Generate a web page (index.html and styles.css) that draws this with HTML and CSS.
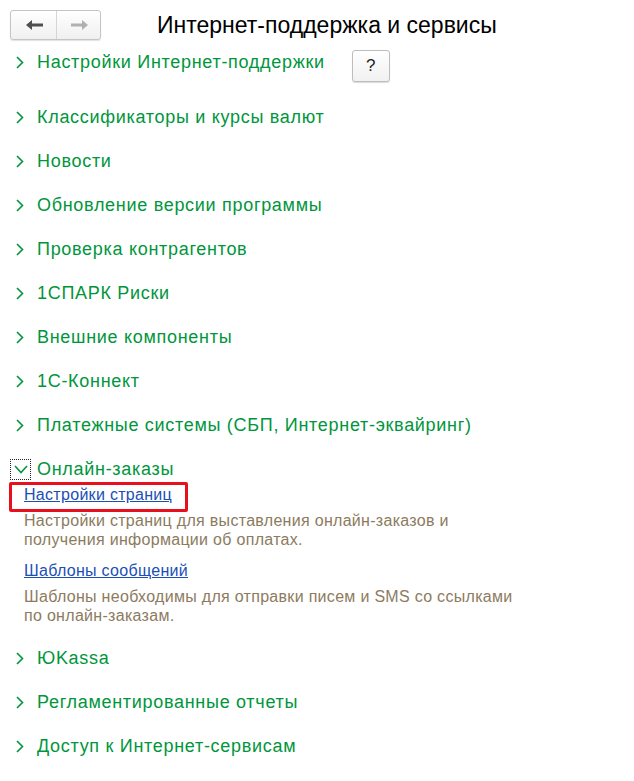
FILE: index.html
```html
<!DOCTYPE html>
<html lang="ru">
<head>
<meta charset="utf-8">
<title>Интернет-поддержка и сервисы</title>
<link rel="stylesheet" href="styles.css">
</head>
<body>
<div class="page">
  <header class="header">
    <div class="nav">
      <button class="nav-btn back" type="button" aria-label="Назад">
        <svg width="18" height="10" viewBox="0 0 18 10"><path d="M0 5 L6 0 L6 3.5 L17 3.5 L17 6.5 L6 6.5 L6 10 Z" fill="#4f4f4f"/></svg>
      </button>
      <button class="nav-btn fwd" type="button" aria-label="Вперед">
        <svg width="18" height="10" viewBox="0 0 18 10"><path d="M18 5 L12 0 L12 3.5 L1 3.5 L1 6.5 L12 6.5 L12 10 Z" fill="#b0b0b0"/></svg>
      </button>
    </div>
    <h1 class="title">Интернет-поддержка и сервисы</h1>
  </header>

  <div class="section first">
    <div class="row">
      <svg class="chev" width="8" height="13" viewBox="0 0 8 13"><polyline points="1,1 6.5,6.5 1,12" fill="none" stroke="#00963c" stroke-width="1.6"/></svg>
      <span class="label">Настройки Интернет-поддержки</span>
    </div>
    <button class="help" type="button">?</button>
  </div>

  <div class="section"><div class="row"><svg class="chev" width="8" height="13" viewBox="0 0 8 13"><polyline points="1,1 6.5,6.5 1,12" fill="none" stroke="#00963c" stroke-width="1.6"/></svg><span class="label">Классификаторы и курсы валют</span></div></div>
  <div class="section"><div class="row"><svg class="chev" width="8" height="13" viewBox="0 0 8 13"><polyline points="1,1 6.5,6.5 1,12" fill="none" stroke="#00963c" stroke-width="1.6"/></svg><span class="label">Новости</span></div></div>
  <div class="section"><div class="row"><svg class="chev" width="8" height="13" viewBox="0 0 8 13"><polyline points="1,1 6.5,6.5 1,12" fill="none" stroke="#00963c" stroke-width="1.6"/></svg><span class="label">Обновление версии программы</span></div></div>
  <div class="section"><div class="row"><svg class="chev" width="8" height="13" viewBox="0 0 8 13"><polyline points="1,1 6.5,6.5 1,12" fill="none" stroke="#00963c" stroke-width="1.6"/></svg><span class="label">Проверка контрагентов</span></div></div>
  <div class="section"><div class="row"><svg class="chev" width="8" height="13" viewBox="0 0 8 13"><polyline points="1,1 6.5,6.5 1,12" fill="none" stroke="#00963c" stroke-width="1.6"/></svg><span class="label">1СПАРК Риски</span></div></div>
  <div class="section"><div class="row"><svg class="chev" width="8" height="13" viewBox="0 0 8 13"><polyline points="1,1 6.5,6.5 1,12" fill="none" stroke="#00963c" stroke-width="1.6"/></svg><span class="label">Внешние компоненты</span></div></div>
  <div class="section"><div class="row"><svg class="chev" width="8" height="13" viewBox="0 0 8 13"><polyline points="1,1 6.5,6.5 1,12" fill="none" stroke="#00963c" stroke-width="1.6"/></svg><span class="label">1С-Коннект</span></div></div>
  <div class="section"><div class="row"><svg class="chev" width="8" height="13" viewBox="0 0 8 13"><polyline points="1,1 6.5,6.5 1,12" fill="none" stroke="#00963c" stroke-width="1.6"/></svg><span class="label">Платежные системы (СБП, Интернет-эквайринг)</span></div></div>

  <div class="section expanded">
    <div class="row open">
      <span class="chev-box"><svg width="14" height="9" viewBox="0 0 14 9"><polyline points="1,1 7,7.5 13,1" fill="none" stroke="#00963c" stroke-width="1.6"/></svg></span>
      <span class="label">Онлайн-заказы</span>
    </div>
    <div class="sub">
      <div class="item">
        <span class="link-wrap"><a class="link" href="#">Настройки страниц</a><span class="highlight"></span></span>
        <p class="desc">Настройки страниц для выставления онлайн-заказов и<br>получения информации об оплатах.</p>
      </div>
      <div class="item">
        <a class="link" href="#">Шаблоны сообщений</a>
        <p class="desc">Шаблоны необходимы для отправки писем и SMS со ссылками<br>по онлайн-заказам.</p>
      </div>
    </div>
  </div>

  <div class="section"><div class="row"><svg class="chev" width="8" height="13" viewBox="0 0 8 13"><polyline points="1,1 6.5,6.5 1,12" fill="none" stroke="#00963c" stroke-width="1.6"/></svg><span class="label">ЮKassa</span></div></div>
  <div class="section"><div class="row"><svg class="chev" width="8" height="13" viewBox="0 0 8 13"><polyline points="1,1 6.5,6.5 1,12" fill="none" stroke="#00963c" stroke-width="1.6"/></svg><span class="label">Регламентированные отчеты</span></div></div>
  <div class="section"><div class="row"><svg class="chev" width="8" height="13" viewBox="0 0 8 13"><polyline points="1,1 6.5,6.5 1,12" fill="none" stroke="#00963c" stroke-width="1.6"/></svg><span class="label">Доступ к Интернет-сервисам</span></div></div>
</div>
</body>
</html>
```

FILE: styles.css
```css
html, body {
  margin: 0;
  padding: 0;
  background: #ffffff;
}
body {
  font-family: "Liberation Sans", Arial, sans-serif;
  width: 634px;
  height: 781px;
  overflow: hidden;
}
.header {
  display: flex;
  align-items: center;
  padding: 9px 0 0 10px;
  box-sizing: border-box;
  height: 40px;
}
.nav {
  display: flex;
  width: 91px;
  height: 30px;
  box-sizing: border-box;
  border: 1px solid #c4c4c4;
  border-radius: 3px;
  background: linear-gradient(#ffffff, #f0f0f0);
  box-shadow: 0 1px 1px rgba(0,0,0,0.12);
  overflow: hidden;
}
.nav-btn {
  flex: 1;
  margin: 0;
  padding: 0;
  border: 0;
  background: transparent;
  display: flex;
  align-items: center;
  justify-content: center;
}
.nav-btn.back {
  border-right: 1px solid #d6d6d6;
  padding-left: 2px;
}
.title {
  margin: 0 0 0 56px;
  font-size: 23px;
  font-weight: normal;
  color: #000;
  line-height: 30px;
}
.section {
  display: flex;
  align-items: flex-start;
}
.section.first {
  height: 44px;
  margin-bottom: 11px;
}
.row {
  display: flex;
  align-items: center;
  height: 44px;
}
.chev {
  margin-left: 16px;
  margin-right: 13px;
  flex: none;
}
.label {
  font-size: 18px;
  letter-spacing: 0.7px;
  color: #00963c;
  white-space: nowrap;
}
.help {
  margin: 10px 0 0 27px;
  width: 38px;
  height: 32px;
  box-sizing: border-box;
  border: 1px solid #bdbdbd;
  border-radius: 3px;
  background: linear-gradient(#ffffff, #f1f1f1);
  box-shadow: 0 1px 1px rgba(0,0,0,0.15);
  font-family: "Liberation Sans", Arial, sans-serif;
  font-size: 17px;
  color: #222;
  padding: 0;
}
.section.expanded {
  display: block;
}
.row.open {
  height: auto;
  padding-top: 12px;
}
.chev-box {
  width: 21px;
  height: 21px;
  box-sizing: border-box;
  border: 1px dotted #222;
  margin-left: 10px;
  margin-right: 6px;
  display: flex;
  align-items: center;
  justify-content: center;
}
.sub {
  padding: 5px 0 0 24px;
  margin-bottom: 11px;
}
.item + .item {
  margin-top: 12px;
}
.link-wrap {
  position: relative;
  display: inline-block;
}
.link {
  font-size: 16px;
  letter-spacing: 0.3px;
  line-height: 19px;
  color: #1a4fb5;
  text-decoration: underline;
  display: inline-block;
}
.highlight {
  position: absolute;
  left: -15px;
  top: -3px;
  right: -16px;
  bottom: -8px;
  border: 3px solid #e8101c;
  border-radius: 2px;
}
.desc {
  margin: 7px 0 0 0;
  font-size: 16px;
  letter-spacing: 0.3px;
  line-height: 19px;
  color: #8c7b5e;
}
```
